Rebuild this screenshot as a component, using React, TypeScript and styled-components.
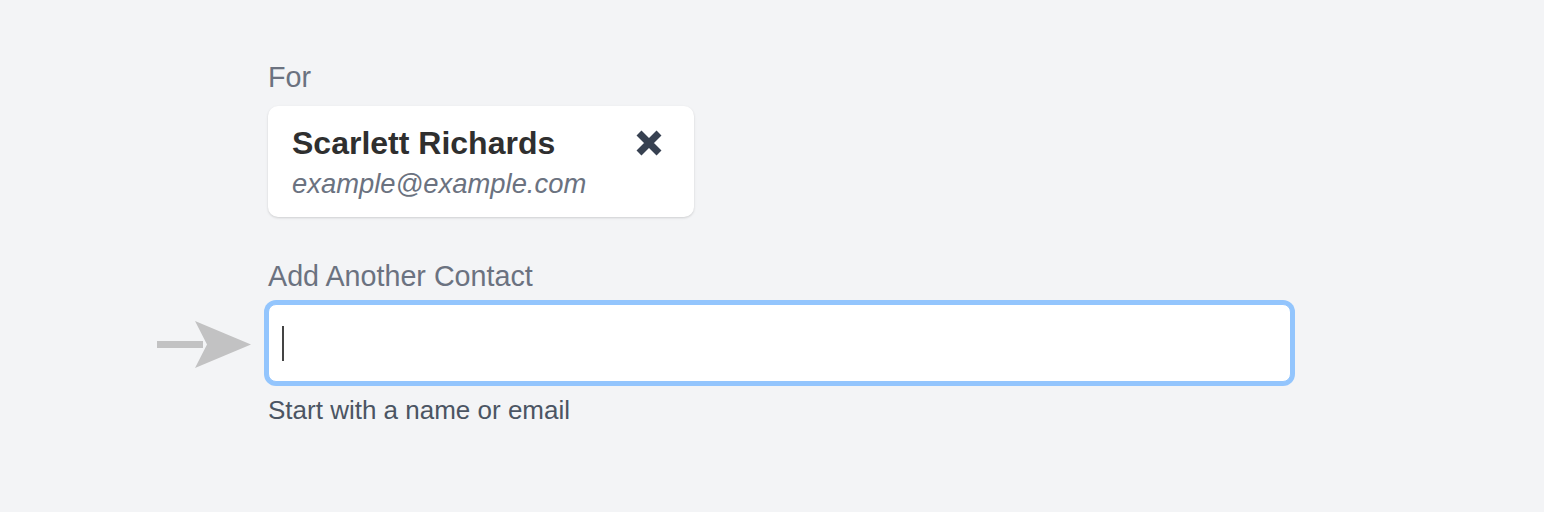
import { createGlobalStyle, styled } from "styled-components";

const GlobalStyle = createGlobalStyle`
  html, body {
    margin: 0;
    background: #f3f4f6;
  }
  body {
    font-family: "Liberation Sans", Arial, sans-serif;
  }
`;

const Page = styled.main`
  min-height: 512px;
  box-sizing: border-box;
  padding: 59px 0 0 268px;
  display: flex;
  flex-direction: column;
`;

const Label = styled.div<{ $mt?: string }>`
  font-size: 28.7px;
  line-height: 36px;
  color: #6b7280;
  margin-top: ${(props) => props.$mt || "0"};
`;

const ContactCard = styled.div`
  width: 426px;
  box-sizing: border-box;
  margin-top: 11px;
  padding: 17px 32px 16px 24px;
  background: #fff;
  border-radius: 10px;
  box-shadow: 0 1px 3px rgba(0, 0, 0, 0.1), 0 1px 2px rgba(0, 0, 0, 0.06);
`;

const CardTop = styled.div`
  display: flex;
  justify-content: space-between;
  align-items: center;
`;

const ContactName = styled.div`
  font-size: 32px;
  line-height: 40px;
  font-weight: 700;
  color: #2f2f2f;
`;

const ContactEmail = styled.div`
  margin-top: 4px;
  font-size: 27.4px;
  line-height: 34px;
  font-style: italic;
  color: #6b7280;
`;

const RemoveButton = styled.button`
  display: flex;
  padding: 0;
  border: none;
  background: none;
  cursor: pointer;
`;

const FieldWrap = styled.div`
  position: relative;
  margin-top: 10px;
  width: 1023px;
`;

const Field = styled.div`
  height: 78px;
  box-sizing: border-box;
  display: flex;
  align-items: center;
  padding-left: 13px;
  background: #fff;
  border: 1px solid #93c5fd;
  border-radius: 8px;
  box-shadow: 0 0 0 4px #93c5fd;
`;

const Caret = styled.span`
  width: 2px;
  height: 35px;
  background: #444;
`;

const Pointer = styled.svg`
  position: absolute;
  left: -111px;
  top: 17px;
`;

const Hint = styled.div`
  margin-top: 12px;
  font-size: 26px;
  line-height: 32px;
  color: #4b5563;
`;

const CloseIcon = () => (
  <svg width="26" height="26" viewBox="0 0 26 26">
    <path
      d="M3 3 L23 23 M23 3 L3 23"
      stroke="#374151"
      strokeWidth="7"
      strokeLinecap="butt"
    />
  </svg>
);

const App = () => {
  return (
    <>
      <GlobalStyle />
      <Page>
        <Label>For</Label>
        <ContactCard>
          <CardTop>
            <ContactName>Scarlett Richards</ContactName>
            <RemoveButton aria-label="Remove contact">
              <CloseIcon />
            </RemoveButton>
          </CardTop>
          <ContactEmail>example@example.com</ContactEmail>
        </ContactCard>
        <Label $mt="41px">Add Another Contact</Label>
        <FieldWrap>
          <Pointer width="94" height="47" viewBox="0 0 94 47">
            <rect x="0" y="20" width="46" height="7" fill="#c2c2c3" />
            <polygon points="38,0 94,23.5 38,47 50,23.5" fill="#c2c2c3" />
          </Pointer>
          <Field>
            <Caret />
          </Field>
        </FieldWrap>
        <Hint>Start with a name or email</Hint>
      </Page>
    </>
  );
};

export default App;
